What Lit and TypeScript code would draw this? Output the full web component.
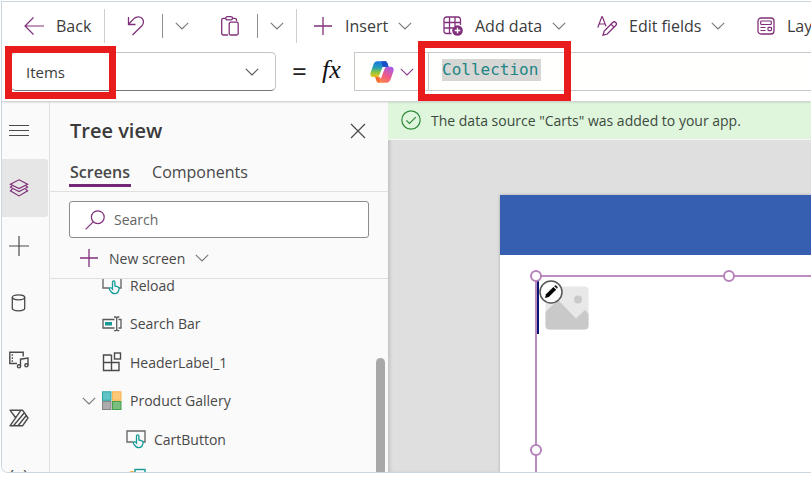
import { LitElement, html, css, svg, nothing, type TemplateResult } from "lit";
import { customElement, property } from "lit/decorators.js";
import { classMap } from "lit/directives/class-map.js";

const P = "#80307a";
const G = "#4a4a4a";
const T = "#159a98";

const glyphs: Record<string, { w: number; h: number; body: TemplateResult }> = {
  back: { w: 20, h: 20, body: svg`<path d="M20 10H1M9.500 1.500L1 10l8.500 8.500" stroke=${P} stroke-width="1.200"/>` },
  undo: { w: 20, h: 20, body: svg`<path d="M1.500 1v7.500H8.500M1.500 8.300L7 2.600C9.500.3 13 .3 15 2.300s2 5.500-.3 7.700L5.500 19" stroke=${P} stroke-width="1.300"/>` },
  paste: { w: 20, h: 20, body: svg`<path d="M7 19H2.200A1.700 1.700 0 0 1 .7 17.300V4A1.700 1.700 0 0 1 2.400 2.300H5M11.500 2.300h2.300A1.700 1.700 0 0 1 15.500 4v1.200" stroke=${P} stroke-width="1.300"/><rect x="4.700" y=".7" width="6.800" height="3.200" rx="1.600" stroke=${P} stroke-width="1.300"/><rect x="8.200" y="6.200" width="9" height="12.800" rx="1.500" stroke=${P} stroke-width="1.300"/>` },
  plus: { w: 20, h: 20, body: svg`<path d="M10 1v18M1 10h18" stroke=${P} stroke-width="1.300"/>` },
  addData: { w: 20, h: 20, body: svg`<path d="M8.500 17.500H3.500A2.500 2.500 0 0 1 1 15V3.500A2.500 2.500 0 0 1 3.500 1H15a2.500 2.500 0 0 1 2.500 2.500V9M1 6.500h16.500M1 12h9M6.500 1v16.500M12 1v9" stroke=${P} stroke-width="1.300"/><circle cx="14.500" cy="14.500" r="5.300" fill=${P}/><path d="M14.500 11.700v5.600M11.700 14.500h5.600" stroke="#fff" stroke-width="1.400"/>` },
  edit: { w: 20, h: 20, body: svg`<path d="M.8 11.500L4.800.8h.6L9 10.300M2.200 8h5.700" stroke=${P} stroke-width="1.200"/><path d="M6 19.200l1.200-4.200 8.500-8.500a2 2 0 0 1 3 3l-8.500 8.500zM14 8.200l2.900 2.900" stroke=${P} stroke-width="1.300"/>` },
  layout: { w: 18, h: 18, body: svg`<rect x="1" y="1" width="16" height="16" rx="3" stroke=${P} stroke-width="1.300"/><rect x="3.700" y="4" width="10.600" height="3.500" rx=".8" stroke=${P} stroke-width="1.200"/><path d="M3.500 10.500h5M3.500 13.500h5" stroke=${P} stroke-width="1.200"/><rect x="11" y="10.400" width="3.500" height="3.200" rx=".8" stroke=${P} stroke-width="1.200"/>` },
  chev: { w: 14, h: 8, body: svg`<path d="M.8.8L7 7 13.200.8" stroke="currentColor" stroke-width="1.100"/>` },
  copilot: { w: 24, h: 22, body: svg`
    <defs>
      <linearGradient id="cb" x1="0" y1="0" x2="0" y2="1"><stop offset="0" stop-color="#1a74e0"/><stop offset=".4" stop-color="#22a0b8"/><stop offset=".7" stop-color="#8cc63f"/><stop offset="1" stop-color="#f3c21c"/></linearGradient>
      <linearGradient id="cp" x1=".8" y1="0" x2=".2" y2="1"><stop offset="0" stop-color="#a45be8"/><stop offset=".5" stop-color="#ee5a8c"/><stop offset="1" stop-color="#fd8a3c"/></linearGradient>
    </defs>
    <path d="M17 1.200c-.6-.8-1.300-1-2.300-1H7.500C5 .2 4 1.800 3.200 4.200L.7 11.300C-.2 14 .8 16 3.200 16h3.300c1.500 0 2.500-.8 3-2.300l3-7.500C13.300 4.500 14 4.200 15.200 4.200H18.200z" fill="url(#cb)"/>
    <path d="M14.500.2c1.600 0 2.400.6 3 2.400l1.300 3.400h-4.400c-1.500 0-2-.3-2.400-2.300L11.500.2z" fill="#1b50c8"/>
    <path d="M7 20.200c.6 1 1.400 1.500 2.500 1.500h7c2.500 0 3.500-1.500 4.300-3.900l2.500-7.200c.9-2.700-.1-4.800-2.500-4.800h-3.300c-1.500 0-2.500.8-3 2.300l-2.800 7.500c-.6 1.700-1.300 2.200-2.500 2.200H5.800z" fill="url(#cp)"/>
    <path d="M9.500 21.700c-1.600 0-2.700-.6-3.300-2.400L5 15.800h4.800z" fill="#f5702e"/>` },
  menu: { w: 20, h: 14, body: svg`<path d="M0 1.500h20M0 6.500h20M0 11.500h20" stroke=${G} stroke-width="1.100"/>` },
  layers: { w: 20, h: 18, body: svg`<g stroke=${P} stroke-width="1.200"><path d="M10 .8l8.600 4.400L10 9.600 1.400 5.200z"/><path d="M3.500 6.400L1.400 8.200 10 12.600l8.600-4.400-2.100-1.800M3.500 9.800l-2.100 2L10 16.900l8.600-5.100-2.100-2"/></g>` },
  add: { w: 20, h: 20, body: svg`<path d="M10 0v20M0 10h20" stroke=${G} stroke-width="1.200"/>` },
  data: { w: 20, h: 20, body: svg`<g stroke=${G} stroke-width="1.300"><ellipse cx="9.500" cy="4.300" rx="6.200" ry="2.500"/><path d="M3.300 4.300v11c0 1.500 2.800 2.500 6.200 2.500s6.200-1 6.200-2.500v-11"/></g>` },
  media: { w: 20, h: 18, body: svg`<g stroke=${G} stroke-width="1.400"><path d="M8 12.500H.8V1.200h13.400V5.500"/><path d="M3.300 3.200v7.500" stroke-dasharray="1.500 1.500"/><path d="M11.500 15.300V8.200L19 7v7.200"/><circle cx="10" cy="15.300" r="1.600"/><circle cx="17.400" cy="14.300" r="1.600"/></g>` },
  flow: { w: 20, h: 18, body: svg`<g stroke=${G} stroke-width="1.400" stroke-linejoin="round"><path d="M6.500 8.500L1 1.200h12.500L19 9l-5.500 7.800H1L11.500 1.800M4.500 16.800L15.300 3.700M9 16.800L17.300 6.500"/></g>` },
  close: { w: 16, h: 16, body: svg`<path d="M1 1l14 14M15 1L1 15" stroke=${G} stroke-width="1.200"/>` },
  search: { w: 20, h: 20, body: svg`<circle cx="12.800" cy="7.200" r="6.400" stroke=${P} stroke-width="1.200"/><path d="M8.200 11.800L.6 19.400" stroke=${P} stroke-width="1.200"/>` },
  check: { w: 20, h: 20, body: svg`<circle cx="10" cy="10" r="9.200" stroke="#2f8a3a" stroke-width="1.200"/><path d="M5.300 10.300l3.200 3.200 6.300-6.300" stroke="#2f8a3a" stroke-width="1.200"/>` },
  button: { w: 20, h: 20, body: svg`<path d="M7 13H1V2h18v11h-2" stroke="#6a6a6a" stroke-width="1.400"/><path d="M10.500 12.500V7a1.200 1.200 0 0 1 2.400 0v4l3 .8c1 .3 1.400.9 1.200 1.900-.3 2.500-1.400 5-4.400 5-2.500 0-3.500-1.500-4.700-3.400-.7-1.100-.9-1.900-.3-2.400.9-.6 1.900.2 2.800 1.200z" fill="#fafafa" stroke=${T} stroke-width="1.300"/>` },
  input: { w: 20, h: 16, body: svg`<g stroke="#5a5a5a" stroke-width="1.300"><path d="M12.500 12H1V3.500h11.500M16.500 3.500H19V12h-2.500"/><path d="M12 1h1.700l1 .8 1-.8h1.600M14.700 1.800v12M12 14.600h1.700l1-.8 1 .8h1.600"/></g><rect x="3" y="6" width="7" height="3.500" fill=${T}/>` },
  component: { w: 20, h: 20, body: svg`<g stroke="#4a4a4a" stroke-width="1.400"><path d="M9.500 3H1.500v15.500H17V10.500H1.500M9.500 3v15.500"/><rect x="12.500" y="1" width="6" height="6"/></g>` },
  gallery: { w: 20, h: 20, body: svg`<rect x=".5" y=".8" width="8.500" height="8.500" fill="#62c4c6" stroke="#2aa3a3"/><rect x="10.500" y=".8" width="8.500" height="8.500" fill="#fbc778" stroke="#f7b34e"/><rect x=".5" y="10.500" width="8.500" height="8" fill="#acacac" stroke="#858585"/><rect x="10.500" y="10.500" width="8.500" height="8" fill="#7bbd7f" stroke="#45a04b"/>` },
  image: { w: 20, h: 20, body: svg`<circle cx="6" cy="7.500" r="4.500" fill="#f7a93c"/><rect x="9" y="1.500" width="10" height="9" fill="#fafafa" stroke=${T} stroke-width="1.400"/>` },
  pencil: { w: 24, h: 24, body: svg`<circle cx="12" cy="12" r="11" fill="#fff" fill-opacity=".85" stroke="#55555a" stroke-width="1.500"/><path d="M6 18l1-3.800L14.400 7l2.700 2.700-7.300 7.200z" fill="#000"/><path d="M15.200 6.200l.8-.8c.8-.7 3.300 1.700 2.600 2.600l-.8.8z" fill="#222"/>` },
  picture: { w: 44, h: 44, body: svg`<rect x=".5" y=".5" width="43" height="43" rx="4" fill="#e8e8e8"/><circle cx="33" cy="13.500" r="4" fill="#c9c9c9"/><path d="M.5 26L13 14l18 18.500 9-8.500 3.500 4V39.500a4 4 0 0 1-4 4h-35a4 4 0 0 1-4-4z" fill="#c9c9c9"/>` },
};

function icon(name: string) {
  const g = glyphs[name];
  return html`<svg width=${g.w} height=${g.h} viewBox="0 0 ${g.w} ${g.h}" fill="none" aria-hidden="true">${g.body}</svg>`;
}

const base = css`
  :host, * { box-sizing: border-box; }
  svg { display: block; flex: none; }
  button, input, select {
    font: inherit;
    color: inherit;
    margin: 0;
    padding: 0;
    border: 0;
    background: none;
    border-radius: 0;
    outline: none;
  }
  ul { list-style: none; margin: 0; padding: 0; }
`;

@customElement("command-bar")
export class CommandBar extends LitElement {
  static styles = [base, css`
    :host { display: flex; align-items: center; height: 50px; padding-bottom: 2px; overflow: hidden; font-size: 16px; color: #3b3b3b; }
    button { display: flex; flex: none; align-items: center; height: 40px; padding-left: 16px; white-space: nowrap; }
    .label { margin: 0 10px 0 12px; }
    .back, .undo { padding-left: 22px; }
    .back { width: 102px; }
    .undo { width: 57px; }
    .more { padding-left: 12px; width: 42px; }
    .more.slim { width: 38px; }
    .paste { width: 52px; }
    .insert { width: 130px; }
    .data { width: 154px; }
    .fields { width: 160px; }
    .rule { flex: none; width: 1px; height: 34px; background: #cfcfcf; }
    .rule.short { height: 24px; background: #8f8f8f; }
    .chev { color: #777; }
  `];

  private menuButton(cls: string, name: string, label: string) {
    return html`<button class=${cls}>${icon(name)}<span class="label">${label}</span><span class="chev">${icon("chev")}</span></button>`;
  }

  render() {
    return html`
      <button class="back">${icon("back")}<span class="label">Back</span></button>
      <span class="rule"></span>
      <button class="undo" aria-label="Undo">${icon("undo")}</button>
      <span class="rule short"></span>
      <button class="more chev" aria-label="Undo options">${icon("chev")}</button>
      <button class="paste" aria-label="Paste">${icon("paste")}</button>
      <span class="rule short"></span>
      <button class="more slim chev" aria-label="Paste options">${icon("chev")}</button>
      <span class="rule"></span>
      ${this.menuButton("insert", "plus", "Insert")}
      ${this.menuButton("data", "addData", "Add data")}
      ${this.menuButton("fields", "edit", "Edit fields")}
      ${this.menuButton("layout", "layout", "Layout")}
    `;
  }
}

@customElement("formula-bar")
export class FormulaBar extends LitElement {
  static styles = [base, css`
    :host { display: flex; height: 49px; padding-left: 9px; align-items: flex-start; position: relative; color: #3b3b3b; }
    .property { position: relative; flex: none; width: 265px; height: 39px; }
    .property select {
      appearance: none; width: 100%; height: 100%; padding: 0 0 0 14px; font-size: 15px;
      border: 1px solid #c4c4c4; border-bottom-color: #777; border-radius: 5px; background: #fff;
    }
    .arrow { position: absolute; right: 17px; top: 16px; color: #555; pointer-events: none; }
    .equals { flex: none; width: 46px; padding-left: 16px; line-height: 38px; font-size: 26px; color: #222; }
    .fx { flex: none; width: 32px; font: italic 26px/36px "Liberation Serif", serif; color: #111; }
    .box { display: flex; flex: 1; min-width: 0; height: 39px; border: 1px solid #c8c8c8; border-right: 0; background: #fffffd; }
    .assist { display: flex; flex: none; align-items: center; gap: 6px; width: 74px; padding-left: 15px; border-right: 1px solid #c8c8c8; color: #8a3d8f; }
    .code {
      width: 99px; height: 22px; margin: 6px 0 0 13px; background: #d6d6d4; color: #1d8585;
      font: 16px/22px "DejaVu Sans Mono", monospace;
    }
    .mark { position: absolute; border: 7px solid #e81b1d; pointer-events: none; }
    .mark-property { left: 3px; top: -6px; width: 111px; height: 53px; }
    .mark-code { left: 416px; top: -11px; width: 153px; height: 60px; }
  `];

  render() {
    return html`
      <div class="property">
        <select aria-label="Property"><option>Items</option></select>
        <span class="arrow">${icon("chev")}</span>
      </div>
      <span class="equals">=</span>
      <span class="fx">fx</span>
      <div class="box">
        <button class="assist" aria-label="Copilot">${icon("copilot")}${icon("chev")}</button>
        <input class="code" aria-label="Formula" value="Collection" spellcheck="false" />
      </div>
      <div class="mark mark-property"></div>
      <div class="mark mark-code"></div>
    `;
  }
}

@customElement("side-rail")
export class SideRail extends LitElement {
  static styles = [base, css`
    :host { display: block; min-height: 0; overflow: hidden; border-right: 1px solid #e2e2e2; }
    nav { display: flex; flex-direction: column; height: 402px; }
    button { display: flex; flex: 1; align-items: center; padding-left: 7px; width: 46px; border-radius: 0 3px 3px 0; color: #4a4a4a; font-size: 17px; }
    .active { background: #e6e6e6; }
  `];

  render() {
    const items = [["menu", "Menu"], ["layers", "Tree view"], ["add", "Insert"], ["data", "Data"], ["media", "Media"], ["flow", "Power Automate"]];
    return html`<nav>
      ${items.map(([name, label]) => html`<button class=${classMap({ active: name === "layers" })} aria-label=${label}>${icon(name)}</button>`)}
      <button aria-label="Variables">(x)</button>
    </nav>`;
  }
}

interface Node { icon: string; label: string; level: number; open?: boolean }

@customElement("tree-panel")
export class TreePanel extends LitElement {
  @property({ attribute: false }) nodes: Node[] = [
    { icon: "button", label: "Reload", level: 0 },
    { icon: "input", label: "Search Bar", level: 0 },
    { icon: "component", label: "HeaderLabel_1", level: 0 },
    { icon: "gallery", label: "Product Gallery", level: 0, open: true },
    { icon: "button", label: "CartButton", level: 1 },
    { icon: "image", label: "", level: 1 },
  ];

  static styles = [base, css`
    :host { display: flex; flex-direction: column; min-height: 0; color: #484848; font-size: 14px; }
    header { display: flex; flex: none; align-items: center; justify-content: space-between; height: 57px; padding: 0 22px 0 20px; }
    h2 { margin: 0; font-size: 20px; line-height: 28px; font-weight: 600; color: #3b3b3b; }
    .tabs { display: flex; flex: none; gap: 20px; height: 33px; padding-left: 19px; border-bottom: 1px solid #e0e0e0; font-size: 16px; }
    .tabs button { height: 28px; padding: 0 1px; border-bottom: 3px solid transparent; }
    .tabs .on { font-weight: 600; border-bottom-color: #742774; }
    .search { display: flex; flex: none; align-items: center; gap: 9px; height: 37px; margin: 9px 19px 0 19px; padding-left: 15px; border: 1px solid #8c8c8c; border-radius: 3px; background: #fff; }
    .search input { flex: 1; min-width: 0; }
    .search input::placeholder { color: #666; opacity: 1; }
    .new { display: flex; flex: none; align-items: center; gap: 10px; height: 40px; padding-left: 29px; }
    .scroll { position: relative; flex: 1; min-height: 0; overflow: hidden; border-top: 1px solid #dedede; }
    .list { display: flex; flex-direction: column; height: 231px; margin-top: -13px; }
    .list li { display: flex; flex: 1; align-items: center; padding-left: 52px; }
    .list .nested { padding-left: 76px; }
    .list .open { padding-left: 32px; }
    .twist { color: #777; }
    .open .twist { margin-right: 6px; }
    .name { margin-left: 8px; }
    .thumb { position: absolute; right: 3px; top: 79px; bottom: 0; width: 9px; border-radius: 5px 5px 0 0; background: #a8a8a8; }
  `];

  render() {
    return html`
      <header><h2>Tree view</h2><button aria-label="Close">${icon("close")}</button></header>
      <div class="tabs" role="tablist">
        <button class="on" role="tab" aria-selected="true">Screens</button>
        <button role="tab" aria-selected="false">Components</button>
      </div>
      <label class="search">${icon("search")}<input type="search" aria-label="Search" placeholder="Search" /></label>
      <button class="new">${icon("plus")}<span>New screen</span><span class="twist">${icon("chev")}</span></button>
      <div class="scroll">
        <ul class="list">
          ${this.nodes.map((n) => html`<li class=${classMap({ nested: n.level > 0, open: !!n.open })}>
            ${n.open ? html`<span class="twist">${icon("chev")}</span>` : nothing}
            ${icon(n.icon)}<span class="name">${n.label}</span>
          </li>`)}
        </ul>
        <div class="thumb"></div>
      </div>
    `;
  }
}

@customElement("design-canvas")
export class DesignCanvas extends LitElement {
  static styles = [base, css`
    :host { display: flex; flex-direction: column; min-width: 0; min-height: 0; background: #dfdfdf; box-shadow: inset 3px 0 4px -2px #00000030; overflow: hidden; }
    .notice { display: flex; flex: none; align-items: center; gap: 10px; height: 38px; padding: 0 0 1px 13px; border-bottom: 1px solid #f4f8f3; background: #dff6dd; font-size: 14px; color: #3d4a3d; white-space: nowrap; }
    .board { position: relative; flex: 1; margin: 55px 0 0 112px; background: #fff; box-shadow: 0 0 3px #00000040; }
    .banner { height: 60px; background: #365fb2; }
    .selection { position: absolute; left: 35px; top: 80px; right: -20px; bottom: -20px; border: 2px solid #bb8cbe; }
    .cursor { position: absolute; left: 0; top: 4px; width: 2px; height: 53px; background: #0c1374; }
    .picture { position: absolute; left: 8px; top: 9px; }
    .pencil { position: absolute; left: 2px; top: 3px; }
    .handle { position: absolute; left: -7px; top: -7px; width: 12px; height: 12px; border: 2px solid #b583b9; border-radius: 50%; background: #fff; }
    .handle.mid { left: 186px; }
    .handle.low { top: 167px; }
  `];

  render() {
    return html`
      <div class="notice" role="status">${icon("check")}<span>The data source "Carts" was added to your app.</span></div>
      <div class="board">
        <div class="banner"></div>
        <div class="selection">
          <div class="cursor"></div>
          <div class="picture">${icon("picture")}</div>
          <button class="pencil" aria-label="Edit gallery">${icon("pencil")}</button>
          <span class="handle"></span><span class="handle mid"></span><span class="handle low"></span>
        </div>
      </div>
    `;
  }
}

@customElement("app-root")
export class AppRoot extends LitElement {
  static styles = [base, css`
    :host { display: block; height: 100vh; padding: 1px 0 29px 1px; background: #fff; font-family: "Open Sans", "Noto Sans", sans-serif; overflow: hidden; }
    .frame { display: flex; flex-direction: column; height: 100%; border: 1px solid #c9d6e1; border-right: 0; border-radius: 0 0 0 7px; overflow: hidden; }
    .top { flex: none; position: relative; z-index: 1; background: #fff; box-shadow: 0 1px 2px #00000038; }
    .work { display: grid; grid-template-columns: 48px 338px 1fr; grid-template-rows: minmax(0, 1fr); flex: 1; min-height: 0; padding-top: 1px; background: #fafafa; overflow: hidden; }
  `];

  render() {
    return html`<div class="frame">
      <div class="top"><command-bar></command-bar><formula-bar></formula-bar></div>
      <div class="work"><side-rail></side-rail><tree-panel></tree-panel><design-canvas></design-canvas></div>
    </div>`;
  }
}
